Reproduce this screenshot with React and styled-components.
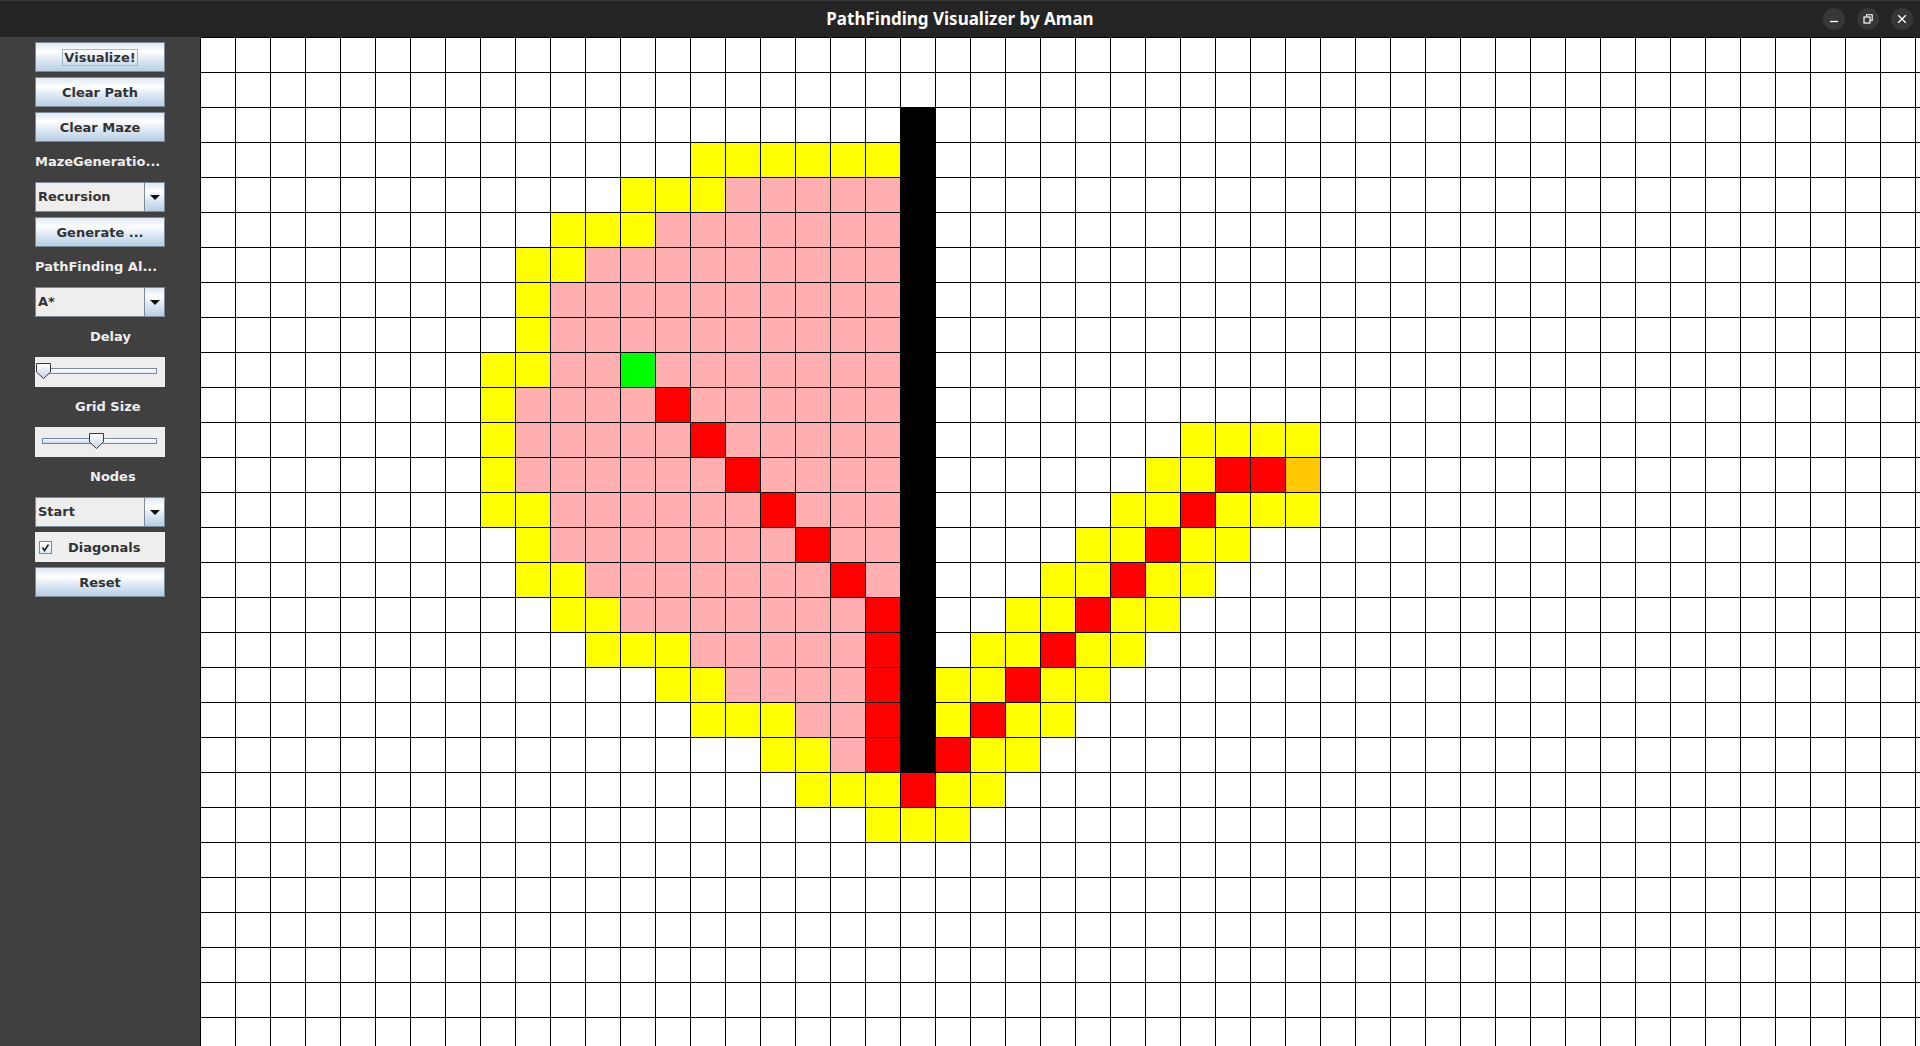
import React from 'react'
import styled, { createGlobalStyle } from 'styled-components'

const GlobalStyle = createGlobalStyle`
  html, body {
    margin: 0;
    padding: 0;
    overflow: hidden;
    background: #404040;
  }
`

const COLS = 50
const ROWS = 29
const FIRST_COL = 8

// one string per row, columns 8..32
const painted = {
  2: '............W',
  3: '......YYYYYYW',
  4: '....YYYPPPPPW',
  5: '..YYYPPPPPPPW',
  6: '.YYPPPPPPPPPW',
  7: '.YPPPPPPPPPPW',
  8: '.YPPPPPPPPPPW',
  9: 'YYPPGPPPPPPPW',
  10: 'YPPPPRPPPPPPW',
  11: 'YPPPPPRPPPPPW.......YYYY.',
  12: 'YPPPPPPRPPPPW......YYRRO.',
  13: 'YYPPPPPPRPPPW.....YYRYYY.',
  14: '.YPPPPPPPRPPW....YYRYY...',
  15: '.YYPPPPPPPRPW...YYRYY....',
  16: '..YYPPPPPPPRW..YYRYY.....',
  17: '...YYYPPPPPRW.YYRYY......',
  18: '.....YYPPPPRWYYRYY.......',
  19: '......YYYPPRWYRYY........',
  20: '........YYPRWRYY.........',
  21: '.........YYYRYY..........',
  22: '...........YYY...........',
}

const cellColors = {
  '.': '#ffffff',
  Y: '#ffff00',
  P: '#ffafaf',
  R: '#ff0000',
  G: '#00ff00',
  O: '#ffc800',
  W: '#000000',
}

const Window = styled.div`
  width: 1920px;
  height: 1046px;
  display: flex;
  flex-direction: column;
  overflow: hidden;
`

const TitleBar = styled.div`
  flex: none;
  height: 37px;
  box-sizing: border-box;
  border-top: 1px solid #363636;
  background: #242424;
  display: grid;
  grid-template-columns: 1fr auto 1fr;
  align-items: center;
`

const Title = styled.div`
  font-family: "Noto Sans", "Open Sans", sans-serif;
  font-weight: 700;
  font-size: 17px;
  color: #ffffff;
  margin-top: -1px;
`

const Controls = styled.div`
  justify-self: end;
  display: flex;
  gap: 12px;
  padding-right: 7px;
`

const CtrlButton = styled.div`
  width: 22px;
  height: 22px;
  border-radius: 50%;
  background: #373737;
  display: flex;
  align-items: center;
  justify-content: center;
`

const Main = styled.div`
  flex: 1;
  min-height: 0;
  display: flex;
`

const Sidebar = styled.div`
  flex: none;
  width: 200px;
  box-sizing: border-box;
  background: #404040;
  padding: 5px 35px;
  display: grid;
  grid-template-columns: 130px;
  grid-auto-rows: 30px;
  row-gap: 5px;
  align-content: start;
  font-family: "DejaVu Sans", sans-serif;
  font-weight: 700;
  font-size: 13px;
`

const Button = styled.div`
  box-sizing: border-box;
  border: 1px solid #7a8a99;
  background: linear-gradient(#dde8f3 0%, #ffffff 30%, #dde8f3 60%, #b8cfe5 100%);
  color: #333333;
  display: flex;
  align-items: center;
  justify-content: center;
`

const Focus = styled.span`
  border: 1px solid #a3b8cc;
  padding: 1px 1px 0;
  line-height: 14px;
`

const Label = styled.div`
  color: #eeeeee;
  line-height: 30px;
  white-space: nowrap;
  padding-left: ${p => p.$indent || 0}px;
`

const Combo = styled.div`
  box-sizing: border-box;
  border: 1px solid #7a8a99;
  background: #eeeeee;
  color: #333333;
  display: flex;
`

const ComboText = styled.div`
  flex: 1;
  padding-left: 2px;
  line-height: 28px;
`

const ComboArrow = styled.div`
  width: 19px;
  border-left: 1px solid #7a8a99;
  background: linear-gradient(#dde8f3 0%, #ffffff 30%, #dde8f3 60%, #b8cfe5 100%);
  display: flex;
  align-items: center;
  justify-content: center;
`

const Triangle = styled.div`
  width: 0;
  height: 0;
  border-left: 5px solid transparent;
  border-right: 5px solid transparent;
  border-top: 5px solid #111;
  margin-top: 1px;
`

const SliderBox = styled.div`
  background: #eeeeee;
  display: flex;
  align-items: center;
  padding: 0 8px 0 7px;
`

const Track = styled.div`
  position: relative;
  flex: 1;
  height: 6px;
  box-sizing: border-box;
  border: 1px solid #7a8a99;
  background: linear-gradient(#ffffff, #e4e9ef);
  margin-top: -2px;
`

const TrackFill = styled.div`
  position: absolute;
  left: -1px;
  top: -1px;
  bottom: -1px;
  box-sizing: border-box;
  border: 1px solid #6382bf;
  background: linear-gradient(#ffffff, #c3d4e8);
`

const Thumb = styled.svg`
  position: absolute;
  top: -6px;
  width: 15px;
  height: 16px;
`

const CheckRow = styled.div`
  background: #eeeeee;
  color: #333333;
  display: flex;
  align-items: center;
  padding-left: 4px;
  gap: 16px;
`

const CheckBox = styled.div`
  width: 13px;
  height: 13px;
  box-sizing: border-box;
  border: 1px solid #7a8a99;
  background: linear-gradient(#ffffff, #dde8f3);
  display: flex;
  align-items: center;
  justify-content: center;
`

const Board = styled.div`
  flex: 1;
  overflow: hidden;
  background: #ffffff;
`

const Grid = styled.div`
  display: grid;
  grid-template-columns: repeat(${COLS}, 35px);
  grid-auto-rows: 35px;
`

const Cell = styled.div`
  box-sizing: border-box;
  border-left: 1px solid #000;
  border-top: 1px solid #000;
  background: ${p => cellColors[p.$kind]};
`

function Slider({ value }) {
  return (
    <SliderBox>
      <Track>
        {value > 0 && <TrackFill style={{ width: `calc(${value}% + 2px)` }} />}
        <Thumb style={{ left: `calc(${value}% - 7px)` }} viewBox="0 0 15 16">
          <defs>
            <linearGradient id="thumbFill" x1="0" y1="0" x2="0" y2="1">
              <stop offset="0" stopColor="#ffffff" />
              <stop offset="1" stopColor="#c3d4e8" />
            </linearGradient>
          </defs>
          <path d="M0.5 0.5 H14.5 V9 L7.5 15.5 L0.5 9 Z" fill="url(#thumbFill)" stroke="#3a3a3a" strokeWidth="1" />
        </Thumb>
      </Track>
    </SliderBox>
  )
}

function Dropdown({ children }) {
  return (
    <Combo>
      <ComboText>{children}</ComboText>
      <ComboArrow><Triangle /></ComboArrow>
    </Combo>
  )
}

function App() {
  const cells = []
  for (let r = 0; r < ROWS; r++) {
    const line = painted[r] || ''
    for (let c = 0; c < COLS; c++) {
      const ch = line[c - FIRST_COL] || '.'
      cells.push(<Cell key={r + '-' + c} $kind={c >= FIRST_COL ? ch : '.'} />)
    }
  }

  return (
    <Window>
      <GlobalStyle />
      <TitleBar>
        <div />
        <Title>PathFinding Visualizer by Aman</Title>
        <Controls>
          <CtrlButton>
            <svg width="10" height="10" viewBox="0 0 10 10">
              <path d="M1 7.5 H9" stroke="#fff" strokeWidth="1.3" />
            </svg>
          </CtrlButton>
          <CtrlButton>
            <svg width="10" height="10" viewBox="0 0 10 10">
              <path d="M3.5 2.5 V0.8 H9.2 V6.5 H7.5" stroke="#fff" strokeWidth="1.1" fill="none" />
              <rect x="1" y="3" width="6" height="6" stroke="#fff" strokeWidth="1.2" fill="none" />
            </svg>
          </CtrlButton>
          <CtrlButton>
            <svg width="10" height="10" viewBox="0 0 10 10">
              <path d="M1.2 1.2 L8.8 8.8 M8.8 1.2 L1.2 8.8" stroke="#fff" strokeWidth="1.3" />
            </svg>
          </CtrlButton>
        </Controls>
      </TitleBar>
      <Main>
        <Sidebar>
          <Button><Focus>Visualize!</Focus></Button>
          <Button>Clear Path</Button>
          <Button>Clear Maze</Button>
          <Label>MazeGeneratio...</Label>
          <Dropdown>Recursion</Dropdown>
          <Button>Generate ...</Button>
          <Label>PathFinding Al...</Label>
          <Dropdown>A*</Dropdown>
          <Label $indent={55}>Delay</Label>
          <Slider value={0} />
          <Label $indent={40}>Grid Size</Label>
          <Slider value={47} />
          <Label $indent={55}>Nodes</Label>
          <Dropdown>Start</Dropdown>
          <CheckRow>
            <CheckBox>
              <svg width="9" height="9" viewBox="0 0 9 9">
                <path d="M1.5 4.5 L3.5 7.5 L7.5 1.5" stroke="#222" strokeWidth="1.6" fill="none" />
              </svg>
            </CheckBox>
            Diagonals
          </CheckRow>
          <Button>Reset</Button>
        </Sidebar>
        <Board>
          <Grid>{cells}</Grid>
        </Board>
      </Main>
    </Window>
  )
}

export default App
